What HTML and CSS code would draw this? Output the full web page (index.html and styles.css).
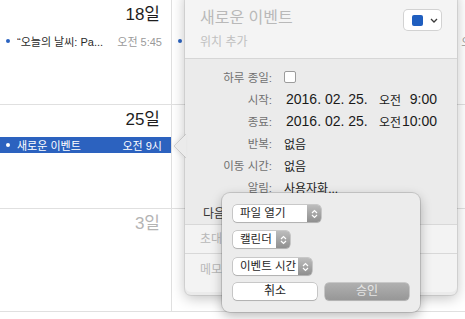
FILE: index.html
```html
<!DOCTYPE html>
<html lang="ko">
<head>
    <meta charset="UTF-8">
    <meta name="viewport" content="width=device-width, initial-scale=1.0">
    <title>캘린더</title>
    <link rel="stylesheet" href="styles.css">
</head>
<body>
    <div class="calendar">
        <div class="day">
            <div class="date">18일</div>
            <div class="event"><span class="dot"></span><span class="ev-title">“오늘의 날씨: Pa...</span><span class="ev-time">오전 5:45</span></div>
        </div>
        <div class="day">
            <div class="date">19일</div>
            <div class="event"><span class="dot"></span><span class="ev-title">“오늘의 날씨: Pa...</span><span class="ev-time">오전 5:45</span></div>
        </div>
        <div class="day">
            <div class="date">20일</div>
            <div class="event"><span class="dot"></span><span class="ev-title">“오늘의 날씨: Pa...</span><span class="ev-time">오전 5:45</span></div>
        </div>
        <div class="day">
            <div class="date">25일</div>
            <div class="event selected"><span class="dot"></span><span class="ev-title">새로운 이벤트</span><span class="ev-time">오전 9시</span></div>
        </div>
        <div class="day"><div class="date">26일</div></div>
        <div class="day"><div class="date">27일</div></div>
        <div class="day"><div class="date other">3일</div></div>
        <div class="day"><div class="date other">4일</div></div>
        <div class="day"><div class="date other">5일</div></div>
    </div>

    <div class="popover">
        <svg class="pop-arrow" width="13" height="24" viewBox="0 0 13 24">
            <polygon points="13,0 1,12 13,24" fill="#ebebeb"/>
            <polyline points="13,0 1,12 13,24" fill="none" stroke="rgba(0,0,0,0.13)" stroke-width="1"/>
        </svg>
        <div class="pop-head">
            <div>
                <div class="pop-title">새로운 이벤트</div>
                <div class="pop-location">위치 추가</div>
            </div>
            <div class="swatch">
                <span class="swatch-color"></span>
                <svg width="8" height="5" viewBox="0 0 8 5"><path d="M1 1l3 3 3-3" fill="none" stroke="#3a3a3a" stroke-width="1.3"/></svg>
            </div>
        </div>
        <div class="pop-body">
            <div class="label">하루 종일:</div>
            <div class="value"><span class="checkbox"></span></div>
            <div class="label">시작:</div>
            <div class="value datetime"><span class="dt-date">2016. 02. 25.</span><span class="dt-ampm">오전</span><span class="dt-time">9:00</span></div>
            <div class="label">종료:</div>
            <div class="value datetime"><span class="dt-date">2016. 02. 25.</span><span class="dt-ampm">오전</span><span class="dt-time">10:00</span></div>
            <div class="label">반복:</div>
            <div class="value">없음</div>
            <div class="label">이동 시간:</div>
            <div class="value">없음</div>
            <div class="label">알림:</div>
            <div class="value">사용자화...</div>
            <div class="next-row">다음</div>
        </div>
        <div class="pop-section">초대</div>
        <div class="pop-section last">메모</div>
    </div>

    <div class="sheet">
        <div class="popup open-with">
            <span class="popup-text">파일 열기</span>
            <span class="stepper"><svg width="7" height="10" viewBox="0 0 7 10"><path d="M1 4l2.5-2.5L6 4M1 6l2.5 2.5L6 6" fill="none" stroke="#fff" stroke-width="1.2"/></svg></span>
        </div>
        <div class="popup calendar-pick">
            <span class="popup-text">캘린더</span>
            <span class="stepper"><svg width="7" height="10" viewBox="0 0 7 10"><path d="M1 4l2.5-2.5L6 4M1 6l2.5 2.5L6 6" fill="none" stroke="#fff" stroke-width="1.2"/></svg></span>
        </div>
        <div class="popup event-time">
            <span class="popup-text">이벤트 시간</span>
            <span class="stepper"><svg width="7" height="10" viewBox="0 0 7 10"><path d="M1 4l2.5-2.5L6 4M1 6l2.5 2.5L6 6" fill="none" stroke="#fff" stroke-width="1.2"/></svg></span>
        </div>
        <div class="buttons">
            <button class="btn">취소</button>
            <button class="btn default">승인</button>
        </div>
    </div>
</body>
</html>
```

FILE: styles.css
```css
body {
    margin: 0;
    width: 465px;
    height: 319px;
    overflow: hidden;
    position: relative;
    background: #ffffff;
    font-family: "Liberation Sans", "Noto Sans CJK KR", sans-serif;
    color: #222;
}

/* calendar grid behind the popover */
.calendar {
    display: grid;
    grid-template-columns: repeat(3, 172px);
    grid-template-rows: 105px 104px 103px;
}
.day {
    box-sizing: border-box;
    border-right: 1px solid #e0e0e0;
    border-bottom: 1px solid #e0e0e0;
    overflow: hidden;
}
.date {
    padding: 5px 11px 0 0;
    text-align: right;
    font-size: 17px;
    line-height: 20px;
    color: #1e1e1e;
}
.date.other {
    color: #b4b4b4;
}
.event {
    display: flex;
    align-items: center;
    height: 16px;
    margin-top: 8px;
    padding: 0 9px 0 6px;
    font-size: 11px;
    color: #2a2a2a;
}
.dot {
    width: 4px;
    height: 4px;
    border-radius: 50%;
    background: #2a62c0;
    margin-right: 7px;
    flex-shrink: 0;
}
.ev-title {
    flex: 1;
    white-space: nowrap;
    overflow: hidden;
}
.ev-time {
    color: #9a9a9a;
    white-space: nowrap;
}
.event.selected {
    margin-top: 7px;
    background: #2c62bf;
    color: #fff;
}
.event.selected .dot {
    background: #fff;
}
.event.selected .ev-time {
    color: #fff;
}

/* event popover */
.popover {
    position: absolute;
    left: 185px;
    top: -10px;
    width: 272px;
    height: 305px;
    background: #ebebeb;
    border-radius: 6px;
    box-shadow: 0 0 0 1px rgba(0, 0, 0, 0.08), 0 3px 14px rgba(0, 0, 0, 0.25);
}
.pop-arrow {
    position: absolute;
    left: -12px;
    top: 144px;
    filter: drop-shadow(-2px 0 2px rgba(0, 0, 0, 0.08));
}
.pop-head {
    box-sizing: border-box;
    height: 69px;
    padding: 18px 16px 0 15px;
    display: flex;
    justify-content: space-between;
    align-items: flex-start;
    background: #f4f4f4;
    border-bottom: 1px solid #d6d6d6;
    border-radius: 6px 6px 0 0;
}
.pop-title {
    font-size: 16px;
    line-height: 20px;
    color: #b9b9b9;
}
.pop-location {
    margin-top: 6px;
    font-size: 12px;
    line-height: 16px;
    color: #c0c0c0;
}
.swatch {
    display: flex;
    align-items: center;
    gap: 7px;
    box-sizing: border-box;
    width: 37px;
    height: 20px;
    margin-top: 2px;
    padding-left: 8px;
    background: #fff;
    border-radius: 4px;
    box-shadow: 0 0 0 1px #d2d2d2;
}
.swatch-color {
    width: 11px;
    height: 11px;
    border-radius: 2px;
    background: #1f5ebf;
}
.pop-body {
    display: grid;
    grid-template-columns: 87px 1fr;
    grid-auto-rows: 22px;
    column-gap: 12px;
    padding: 7px 0 4px;
    align-items: center;
}
.label {
    text-align: right;
    font-size: 11.5px;
    color: #707070;
    white-space: nowrap;
}
.value {
    font-size: 12px;
    color: #222;
}
.checkbox {
    display: block;
    width: 10px;
    height: 10px;
    background: #fff;
    border: 1px solid #9c9c9c;
    border-radius: 2px;
}
.datetime {
    display: flex;
    align-items: center;
    font-size: 14px;
    color: #1a1a1a;
    white-space: nowrap;
}
.dt-date {
    width: 93px;
    padding-left: 2px;
}
.dt-ampm {
    width: 23px;
    font-size: 12px;
}
.dt-time {
    width: 35px;
    text-align: right;
}
.next-row {
    grid-column: 1 / 3;
    margin-top: 6px;
    padding-left: 18px;
    font-size: 12px;
    color: #333;
}
.pop-section {
    box-sizing: border-box;
    height: 29px;
    padding-left: 15px;
    line-height: 28px;
    font-size: 12px;
    color: #b8b8b8;
    background: #f3f3f3;
    border-top: 1px solid #d8d8d8;
}
.pop-section.last {
    height: 39px;
    padding-top: 8px;
    line-height: 16px;
    border-radius: 0 0 6px 6px;
}

/* sheet dialog on top */
.sheet {
    position: absolute;
    left: 222px;
    top: 193px;
    box-sizing: border-box;
    width: 198px;
    height: 119px;
    padding: 12px 11px 0;
    display: flex;
    flex-direction: column;
    align-items: flex-start;
    background: #ececec;
    border-radius: 8px;
    box-shadow: 0 0 0 1px rgba(0, 0, 0, 0.13), 0 4px 12px rgba(0, 0, 0, 0.28);
}
.popup {
    display: flex;
    height: 17px;
    margin-bottom: 9px;
    background: #fff;
    border-radius: 4px;
    box-shadow: 0 0 0 0.5px rgba(0, 0, 0, 0.3), 0 1px 1px rgba(0, 0, 0, 0.12);
    font-size: 11.5px;
    line-height: 17px;
    color: #1e1e1e;
}
.popup.open-with {
    width: 88px;
}
.popup.calendar-pick {
    width: 57px;
    margin-bottom: 10px;
}
.popup.event-time {
    width: 79px;
    margin-bottom: 8px;
}
.popup-text {
    flex: 1;
    padding-left: 7px;
    white-space: nowrap;
    overflow: hidden;
}
.stepper {
    width: 14px;
    display: flex;
    align-items: center;
    justify-content: center;
    border-radius: 0 4px 4px 0;
    background: linear-gradient(#bdbdbd, #8f8f8f);
}
.buttons {
    display: flex;
    gap: 8px;
}
.btn {
    width: 84px;
    height: 17px;
    padding: 0;
    border: none;
    border-radius: 4px;
    font-family: inherit;
    font-size: 12px;
    line-height: 17px;
    color: #1e1e1e;
    background: #fff;
    box-shadow: 0 0 0 0.5px rgba(0, 0, 0, 0.3), 0 1px 1px rgba(0, 0, 0, 0.12);
}
.btn.default {
    color: #e6e6e6;
    background: linear-gradient(#b0b0b0, #979797);
}
```
